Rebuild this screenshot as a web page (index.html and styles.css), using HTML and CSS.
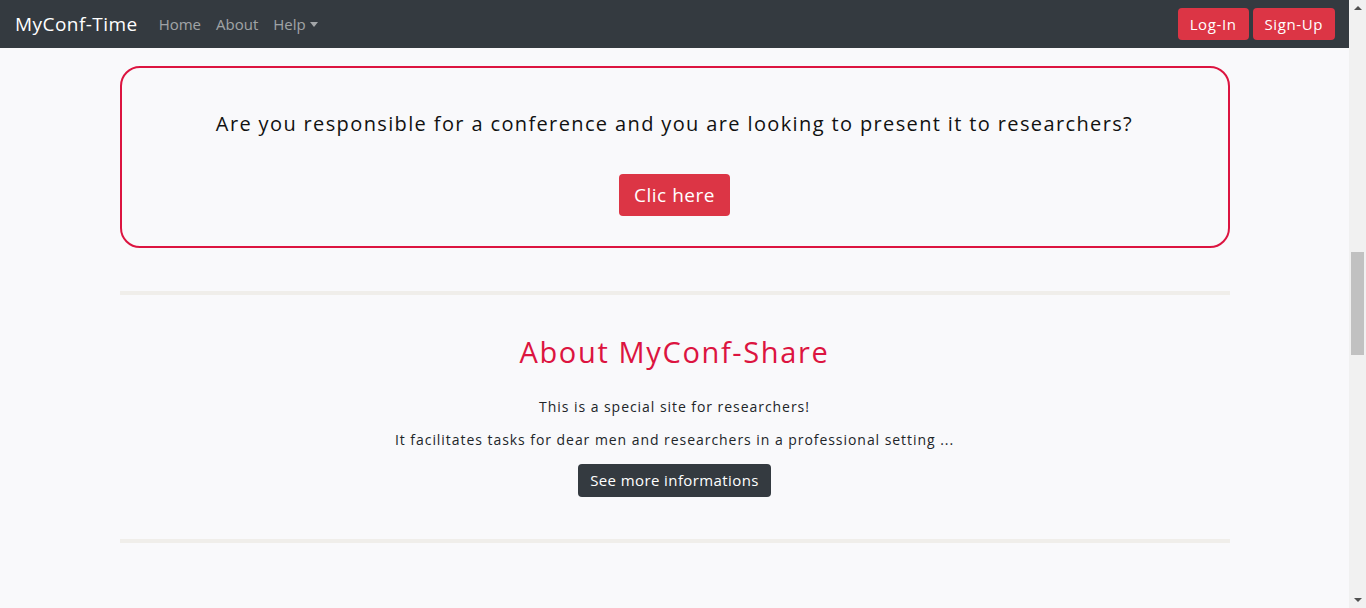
FILE: index.html
```html
<!DOCTYPE html>
<html lang="en">
<head>
<meta charset="utf-8">
<title>MyConf-Time</title>
<link rel="stylesheet" href="styles.css">
</head>
<body>
<div class="screen">
  <div class="page">
    <nav class="navbar">
      <a class="brand" href="#">MyConf-Time</a>
      <ul class="nav-links">
        <li><a href="#">Home</a></li>
        <li><a href="#">About</a></li>
        <li><a href="#" class="dropdown">Help<span class="caret"></span></a></li>
      </ul>
      <div class="nav-actions">
        <a class="btn btn-red" href="#">Log-In</a>
        <a class="btn btn-red" href="#">Sign-Up</a>
      </div>
    </nav>
    <main class="container">
      <section class="promo">
        <p class="promo-text">Are you responsible for a conference and you are looking to present it to researchers?</p>
        <a class="btn btn-red btn-lg" href="#">Clic here</a>
      </section>
      <hr class="divider">
      <section class="about">
        <h2 class="about-title">About MyConf-Share</h2>
        <p class="about-p first">This is a special site for researchers!</p>
        <p class="about-p">It facilitates tasks for dear men and researchers in a professional setting ...</p>
        <a class="btn btn-dark" href="#">See more informations</a>
      </section>
      <hr class="divider second">
    </main>
  </div>
  <div class="scrollbar">
    <div class="arrow up"></div>
    <div class="track">
      <div class="thumb"></div>
    </div>
    <div class="arrow down"></div>
  </div>
</div>
</body>
</html>
```

FILE: styles.css
```css
* { box-sizing: border-box; }
html, body { margin: 0; padding: 0; height: 608px; overflow: hidden; }
body {
  font-family: "Open Sans", "DejaVu Sans", sans-serif;
  background: #f9f9fb;
  color: #212529;
}
.screen { display: flex; height: 608px; }
.page { flex: 1; min-width: 0; }

.navbar {
  height: 48px;
  background: #343a40;
  display: flex;
  align-items: center;
  padding: 0 14px 0 15px;
}
.brand {
  color: #fff;
  text-decoration: none;
  font-size: 19px;
  letter-spacing: 0.45px;
  margin-right: 21px;
}
.nav-links { list-style: none; display: flex; margin: 0; padding: 0; gap: 15px; }
.nav-links a {
  color: rgba(255,255,255,0.55);
  text-decoration: none;
  font-size: 15px;
  display: inline-flex;
  align-items: center;
}
.caret {
  display: inline-block;
  margin-left: 4px;
  border-top: 5px solid rgba(255,255,255,0.55);
  border-left: 4.5px solid transparent;
  border-right: 4.5px solid transparent;
}
.nav-actions { margin-left: auto; display: flex; gap: 4px; }

.btn {
  display: inline-block;
  text-decoration: none;
  border-radius: 4px;
  text-align: center;
}
.btn-red { background: #dc3545; color: #fff; }
.nav-actions .btn {
  height: 32px; line-height: 32px; padding: 0 12px;
  font-size: 15px; letter-spacing: 0.6px;
}
.btn-lg { height: 42px; line-height: 42px; padding: 0 15px; font-size: 19px; letter-spacing: 0.5px; }
.btn-dark {
  background: #343a40; color: #fff;
  height: 33px; line-height: 33px; padding: 0 12px;
  font-size: 15px; letter-spacing: 0.4px;
}

.container { width: 1110px; margin: 0 auto; }

.promo {
  margin-top: 18px;
  border: 2px solid #dc1440;
  border-radius: 20px;
  height: 182px;
  padding-top: 41px;
  text-align: center;
}
.promo-text {
  margin: 0 0 35px;
  font-size: 20px;
  line-height: 30px;
  letter-spacing: 1.37px;
  color: #111;
}

.divider {
  border: 0;
  height: 4px;
  background: #f0eeea;
  margin: 43px 0 0;
}
.about { text-align: center; padding-top: 39px; }
.about-title {
  margin: 0;
  font-weight: 400;
  font-size: 29px;
  line-height: 36px;
  letter-spacing: 1.65px;
  color: #dc1440;
}
.about-p { margin: 11px 0 0; font-size: 14px; line-height: 22px; letter-spacing: 0.95px; }
.about-p.first { margin-top: 26px; }
.about .btn-dark { margin-top: 13px; }
.divider.second { margin-top: 42px; }

.scrollbar {
  width: 17px;
  background: #f1f1f1;
  display: flex;
  flex-direction: column;
  align-items: center;
}
.arrow { width: 0; height: 0; border-left: 4px solid transparent; border-right: 4px solid transparent; }
.arrow.up { border-bottom: 4px solid #505050; margin: 6px 0 0; }
.arrow.down { border-top: 4px solid #505050; margin: 0 0 6px; }
.track { flex: 1; width: 100%; padding-top: 242px; display: flex; justify-content: center; }
.thumb { width: 13px; height: 103px; background: #c1c1c1; }
```
